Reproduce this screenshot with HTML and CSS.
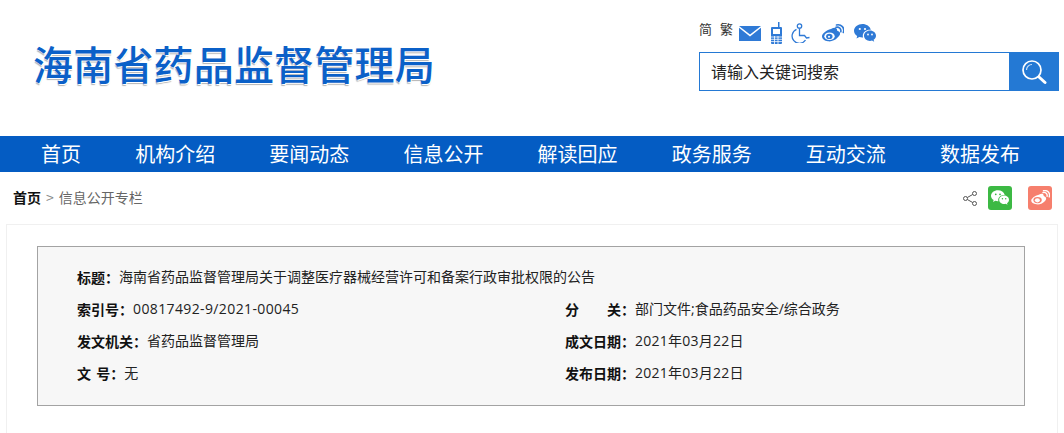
FILE: index.html
```html
<!DOCTYPE html>
<html lang="zh-CN">
<head>
<meta charset="utf-8">
<title>海南省药品监督管理局</title>
<link rel="stylesheet" href="styles.css">
</head>
<body>
<header class="header">
  <h1 class="logo">海南省药品监督管理局</h1>
  <div class="tools">
    <div class="tool-row">
      <span class="lang">简</span><span class="lang lang-b">繁</span>
      <svg class="ti ti-mail" width="22" height="15" viewBox="0 0 22 15"><path fill="#2f7ad6" d="M0 0h22L11 8.500z"/><path fill="#2f7ad6" d="M0 1.800V15h22V1.800L11 10.500z"/></svg>
      <svg class="ti ti-phone" width="11" height="22" viewBox="0 0 11 22"><path fill="#2f7ad6" d="M7 0h1.500v5H10a1 1 0 0 1 1 1v15a1 1 0 0 1-1 1H1a1 1 0 0 1-1-1V6a1 1 0 0 1 1-1h6z"/><rect x="2" y="7" width="7" height="5" fill="#fff"/><path stroke="#fff" stroke-width=".8" d="M0 15h11M0 17.300h11M0 19.600h11M3.500 14v8M7 14v8"/></svg>
      <svg class="ti ti-access" width="19" height="20" viewBox="0 0 19 20" fill="none" stroke="#2f7ad6" stroke-width="1.300"><circle cx="8.500" cy="3" r="2.200"/><path d="M8.500 5.200V12.500h5l2 2.500 3-.5"/><path d="M5.500 6.300A7.300 7.300 0 1 0 14.500 17"/></svg>
      <svg class="ti ti-weibo" width="22" height="18" viewBox="0 0 22 18"><path fill="#2f7ad6" d="M9 5c3.200-1.700 5.600-1.500 6 .6.200.8-.1 1.200.8 1.400 3.200 1 3 4-.2 6.600C13 16.500 9.500 17.800 6 17.300 2.500 16.800 0 15 0 12.300 0 9.800 4 6.300 9 5z"/><ellipse cx="7.500" cy="12.200" rx="5.200" ry="3.800" fill="#fff"/><ellipse cx="7.300" cy="12.400" rx="3.200" ry="2.700" fill="#2f7ad6"/><circle cx="7" cy="12.700" r="1" fill="#fff"/><path fill="none" stroke="#2f7ad6" stroke-width="1.600" stroke-linecap="round" d="M14 3.300c3-.7 5.500 1.500 4.800 4.500M14.500 1c4.800-1 8.500 2.800 6.800 7.500"/></svg>
      <svg class="ti ti-wechat" width="22" height="19" viewBox="0 0 22 19"><path fill="#2f7ad6" d="M8.500 0C3.800 0 0 3 0 6.800c0 2.200 1.200 4 3.200 5.200L2.500 14.500 5.300 13c1 .3 2 .5 3 .5.300 0 .5 0 .8 0-.2-.6-.3-1.200-.3-1.800 0-3.400 3.200-6 7.200-6h.8C15.900 2.300 12.500 0 8.500 0z"/><path fill="#2f7ad6" d="M22 11.700c0-2.900-2.800-5.200-6-5.200s-6 2.300-6 5.200 2.800 5.200 6 5.200c.7 0 1.400-.1 2-.3l2.200 1.200-.6-2c1.500-1 2.400-2.400 2.400-4.100z"/><circle cx="5.800" cy="5" r="1.100" fill="#fff"/><circle cx="11" cy="5" r="1.100" fill="#fff"/><circle cx="14" cy="10.500" r=".9" fill="#fff"/><circle cx="18" cy="10.500" r=".9" fill="#fff"/></svg>
    </div>
    <div class="search">
      <div class="search-input">请输入关键词搜索</div>
      <div class="search-btn">
        <svg width="26" height="26" viewBox="0 0 26 26" fill="none"><circle cx="11" cy="11" r="9" stroke="#fff" stroke-width="1.700"/><path d="M5.500 11a5.500 5.500 0 0 1 5.500-5.500" stroke="#cfe2f7" stroke-width="1.200"/><path d="M18 18l6 5.500" stroke="#fff" stroke-width="3" stroke-linecap="round"/></svg>
      </div>
    </div>
  </div>
</header>
<nav class="nav">
  <a>首页</a><a>机构介绍</a><a>要闻动态</a><a>信息公开</a><a>解读回应</a><a>政务服务</a><a>互动交流</a><a>数据发布</a>
</nav>
<div class="crumb-bar">
  <div class="crumb"><b>首页</b><span class="sep">&gt;</span><span>信息公开专栏</span></div>
  <div class="share">
    <svg class="share-i" width="14" height="15" viewBox="0 0 14 15" fill="none" stroke="#555" stroke-width="1"><circle cx="2.500" cy="7.500" r="2"/><circle cx="11.500" cy="2.500" r="2"/><circle cx="11.500" cy="12.500" r="2"/><path d="M4.300 6.500l5.400-3M4.300 8.500l5.400 3"/></svg>
    <span class="badge badge-green">
      <svg width="18" height="16" viewBox="0 0 22 19"><path fill="#fff" d="M8.500 0C3.800 0 0 3 0 6.800c0 2.200 1.200 4 3.200 5.200L2.500 14.500 5.300 13c1 .3 2 .5 3 .5.300 0 .5 0 .8 0-.2-.6-.3-1.200-.3-1.800 0-3.400 3.200-6 7.200-6h.8C15.900 2.300 12.500 0 8.500 0z"/><path fill="#fff" d="M22 11.700c0-2.900-2.800-5.200-6-5.200s-6 2.300-6 5.200 2.800 5.200 6 5.200c.7 0 1.400-.1 2-.3l2.200 1.200-.6-2c1.500-1 2.400-2.400 2.400-4.100z"/><circle cx="5.800" cy="5" r="1.100" fill="#3cb944"/><circle cx="11" cy="5" r="1.100" fill="#3cb944"/><circle cx="14" cy="10.500" r=".9" fill="#3cb944"/><circle cx="18" cy="10.500" r=".9" fill="#3cb944"/></svg>
    </span>
    <span class="badge badge-red">
      <svg width="19" height="16" viewBox="0 0 22 19"><path fill="#fff" d="M9 5.500c3-1.600 5.200-1.400 5.600.5.200.8-.1 1.200.8 1.400 3 1 3 3.800.4 6.300C13 16.500 9.500 17.500 6 17 2.500 16.500 0 15 0 12.500 0 10 4 6.800 9 5.500z"/><ellipse cx="7.500" cy="12" rx="5" ry="3.700" fill="#f67f6d"/><ellipse cx="7.300" cy="12.200" rx="3" ry="2.500" fill="#fff"/><path fill="none" stroke="#fff" stroke-width="1.600" stroke-linecap="round" d="M14 3c3-.7 5.500 1.500 4.800 4.500M14.500.8c4.800-1 8.500 2.800 6.800 7.500"/></svg>
    </span>
  </div>
</div>
<main class="card">
  <section class="meta">
    <div class="meta-row"><b>标题：</b><span>海南省药品监督管理局关于调整医疗器械经营许可和备案行政审批权限的公告</span></div>
    <div class="meta-grid">
      <div class="meta-row"><b>索引号：</b><span class="num-long">00817492-9/2021-00045</span></div>
      <div class="meta-row"><b class="w4 spread"><i>分</i><i>关：</i></b><span>部门文件;食品药品安全/综合政务</span></div>
      <div class="meta-row"><b>发文机关：</b><span>省药品监督管理局</span></div>
      <div class="meta-row"><b class="w4">成文日期：</b><span class="num">2021年03月22日</span></div>
      <div class="meta-row"><b class="wen">文 号：</b><span>无</span></div>
      <div class="meta-row"><b class="w4">发布日期：</b><span class="num">2021年03月22日</span></div>
    </div>
  </section>
</main>
</body>
</html>
```
FILE: styles.css
```css
* { box-sizing: border-box; }
html, body { margin: 0; padding: 0; }
body {
  width: 1064px;
  height: 433px;
  overflow: hidden;
  background: #fff;
  color: #222;
  font-family: "Noto Sans CJK SC", "Liberation Sans", sans-serif;
}
.header {
  height: 136px;
  display: flex;
  justify-content: space-between;
  padding: 0 5px 0 33px;
}
.logo {
  margin: 37px 0 0;
  font-size: 40px;
  line-height: 52px;
  height: 52px;
  font-weight: 500;
  letter-spacing: .2px;
  color: #0b60c8;
  text-shadow: 1px 1px 0 #fff, 0 2px 1px #b4b4b4;
  white-space: nowrap;
}
.tools { width: 360px; padding-top: 16px; }
.tool-row {
  display: flex;
  align-items: center;
  height: 36px;
  font-size: 13px;
  color: #333;
  position: relative;
  top: -1px;
}
.lang { margin-right: 8px; position: relative; top: -4px; line-height: 16px; }
.lang-b { margin-right: 6px; }
.ti { display: block; flex: none; }
.ti-mail { margin-right: 10px; }
.ti-phone { margin-right: 9px; }
.ti-access { margin-right: 12px; }
.ti-weibo { margin-right: 10px; }
.search {
  display: flex;
  height: 39px;
  border: 1px solid #2479d4;
}
.search-input {
  flex: 1;
  padding-left: 11px;
  font-size: 16px;
  line-height: 37px;
  color: #222;
}
.search-btn {
  width: 49px;
  background: #2479d4;
  display: flex;
  align-items: center;
  justify-content: center;
}
.nav {
  height: 36px;
  background: #045cc3;
  display: flex;
  gap: 54.15px;
  padding-left: 41px;
  font-size: 20px;
  line-height: 36px;
  color: #fff;
  white-space: nowrap;
}
.crumb-bar {
  height: 52px;
  display: flex;
  justify-content: space-between;
  align-items: center;
  padding: 0 12px 0 13px;
}
.crumb { font-size: 14px; color: #666; display: flex; position: relative; top: -1px; }
.crumb b { color: #111; font-weight: 700; }
.sep { margin: 0 5px; color: #888; }
.share { display: flex; align-items: center; }
.share-i { margin-right: 11px; }
.badge {
  width: 24px;
  height: 24px;
  border-radius: 3px;
  display: flex;
  align-items: center;
  justify-content: center;
}
.badge-green { background: #3cb944; margin-right: 16px; }
.badge-red { background: #f67f6d; }
.card {
  margin-left: 6px;
  width: 1052px;
  height: 209px;
  border: 1px solid #f0f0f0;
  border-bottom: none;
  padding: 21px 30px 0;
}
.meta {
  width: 988px;
  height: 160px;
  background: #f7f7f7;
  border: 1px solid #a3a3a3;
  padding: 14px 39px;
  font-size: 14px;
  color: #222;
}
.meta-grid { display: grid; grid-template-columns: 488px 1fr; }
.meta-row { height: 32px; line-height: 32px; display: flex; white-space: nowrap; }
.meta-row b { font-weight: 700; color: #111; font-size: 14px; }
.meta-row span { font-family: "Open Sans", "Noto Sans CJK SC", sans-serif; font-size: 14px; }
.meta-row span.num { letter-spacing: .25px; }
.meta-row span.num-long { letter-spacing: .38px; }
.meta-row b.w4 { width: 70px; flex: none; }
.wen { word-spacing: 2px; }
.spread { display: flex; justify-content: space-between; }
.spread i { font-style: normal; }
```
